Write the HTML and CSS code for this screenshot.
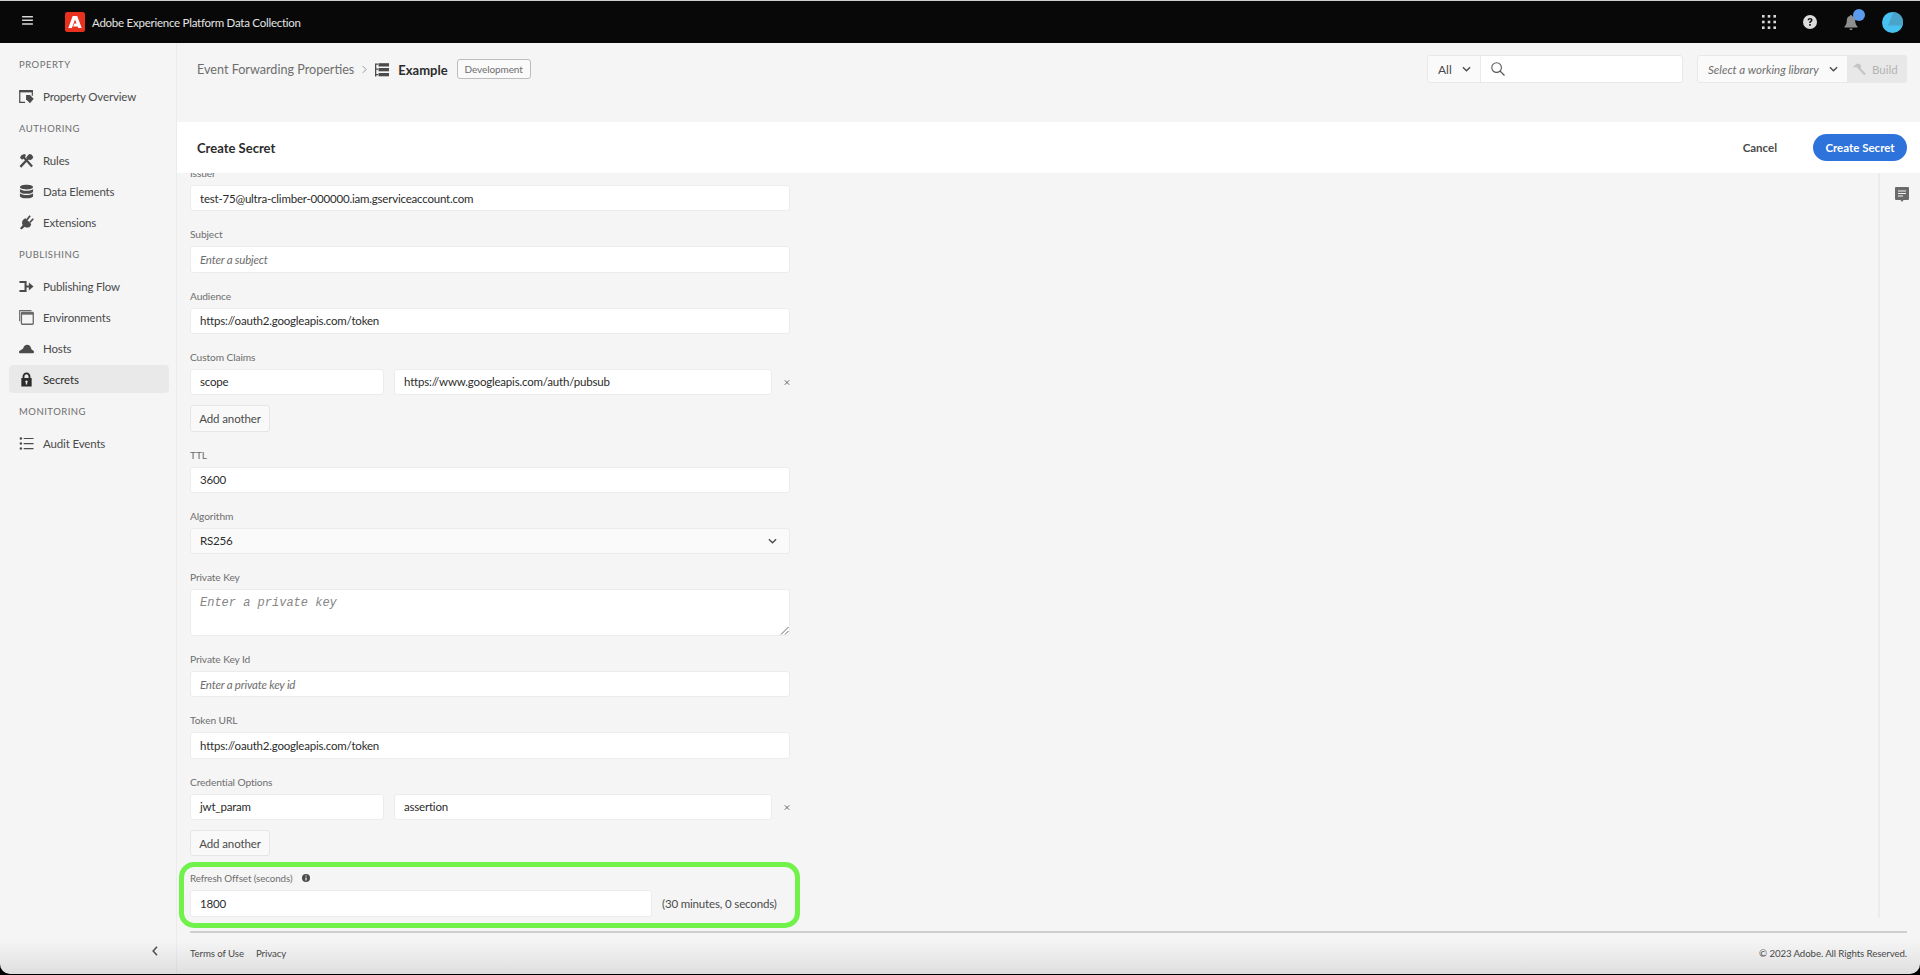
FILE: index.html
```html
<!DOCTYPE html>
<html lang="en">
<head>
<meta charset="utf-8">
<title>Create Secret</title>
<link rel="stylesheet" href="styles.css">
</head>
<body>
<div class="app">
  <header class="topbar">
    <svg class="menu-icon" viewBox="0 0 12 10"><path d="M0 0h12v1.600H0zM0 4h12v1.600H0zM0 8h12v1.600H0z"/></svg>
    <svg class="logo" viewBox="0 0 20 20"><rect width="20" height="20" rx="2.500" fill="#e8321f"/><path d="M7.700 4h4.500l4.500 12h-3.400L10 7.600 6.900 16H3.300z M9.300 11.400h2.700l1.300 3.200H8.100z" fill="#fff"/></svg>
    <span class="product">Adobe Experience Platform Data Collection</span>
    <div class="top-actions">
      <svg class="grid-icon" viewBox="0 0 14 14"><g fill="#d8d8d8"><rect x="0" y="0" width="2.600" height="2.600"/><rect x="5.700" y="0" width="2.600" height="2.600"/><rect x="11.400" y="0" width="2.600" height="2.600"/><rect x="0" y="5.700" width="2.600" height="2.600"/><rect x="5.700" y="5.700" width="2.600" height="2.600"/><rect x="11.400" y="5.700" width="2.600" height="2.600"/><rect x="0" y="11.400" width="2.600" height="2.600"/><rect x="5.700" y="11.400" width="2.600" height="2.600"/><rect x="11.400" y="11.400" width="2.600" height="2.600"/></g></svg>
      <svg class="help-icon" viewBox="0 0 14 14"><circle cx="7" cy="7" r="7" fill="#dcdcdc"/><path d="M4.600 5.300C4.700 3.900 5.700 3 7.100 3c1.500 0 2.400.9 2.400 2 0 1-.6 1.500-1.200 1.900-.5.3-.6.6-.6 1.200H6.200c0-1 .2-1.500 1-2 .5-.3.7-.6.7-1 0-.5-.3-.8-.8-.8-.6 0-.9.4-1 1z" fill="#111"/><rect x="6.200" y="9" width="1.600" height="1.700" fill="#111"/></svg>
      <span class="bell">
        <svg class="bell-icon" viewBox="0 0 14 15"><path d="M7 0c.7 0 1 .4 1 1 2.200.5 3.200 2.200 3.200 4.400 0 3 .8 4.600 2.300 6.100v1H.5v-1C2 10 2.800 8.400 2.800 5.400 2.800 3.200 3.800 1.500 6 1c0-.6.300-1 1-1zM5.500 13.400h3C8.500 14.400 7.800 15 7 15s-1.500-.6-1.500-1.600z" fill="#8f8f8f"/></svg>
        <span class="bell-dot"></span>
      </span>
      <svg class="avatar" viewBox="0 0 21 21"><circle cx="10.500" cy="10.500" r="10.500" fill="#46c1f0"/><path d="M6 13.500 11.500 0A10.500 10.500 0 0 1 20.800 13.500z" fill="#4aa3c8"/></svg>
    </div>
  </header>

  <div class="workspace">
    <nav class="sidebar">
      <div class="nav-label">PROPERTY</div>
      <a class="nav-item"><svg class="nav-icon" viewBox="0 0 16 16"><path d="M6.500 14.200H.8V1.800h13.400v5.500" fill="none" stroke="#4b4b4b" stroke-width="1.300"/><rect x=".8" y="1.200" width="13.400" height="2.400" fill="#4b4b4b"/><path d="M7.500 6.500h4.200l4 4-4 4.700-4.200-4.200z" fill="#4b4b4b"/></svg>Property Overview</a>
      <div class="nav-label">AUTHORING</div>
      <a class="nav-item"><svg class="nav-icon" viewBox="0 0 16 16"><path d="M1.500 14.800 11 4.500" stroke="#4b4b4b" stroke-width="2.400" fill="none"/><path d="M7.500 4.800 10.800 1l2.500.5 2 2.800-1.200 2-2.200 1.500z" fill="#4b4b4b"/><path d="M14 14.500 5 4.500" stroke="#4b4b4b" stroke-width="2.400" fill="none"/><path d="M1 5 2.500 2.500 5.500 1l2 1-1.500 2.800-2.500 2.500z" fill="#4b4b4b"/></svg>Rules</a>
      <a class="nav-item"><svg class="nav-icon" viewBox="0 0 16 16"><path d="M8 .8c4 0 7 1 7 2.500S12 5.800 8 5.800 1 4.800 1 3.300 4 .8 8 .8zM1 5.200c1 1.300 3.800 1.900 7 1.900s6-.6 7-1.900v2.800C15 9.500 12 10.500 8 10.500S1 9.500 1 8zM1 9.900c1 1.300 3.800 1.900 7 1.900s6-.6 7-1.900v2.800c0 1.500-3 2.500-7 2.500S1 14.200 1 12.700z" fill="#4b4b4b"/></svg>Data Elements</a>
      <a class="nav-item"><svg class="nav-icon" viewBox="0 0 16 16"><path d="M7 3.500 13 9.500c-.3 2-1.500 3.500-3.500 3.800-1.400.2-2.500-.1-3.400-.9L2.800 15.500 1 14l3-3.300C3.200 9.500 3 8 3.500 6.800 4 5.200 5.300 4 7 3.500z" fill="#4b4b4b"/><path d="M8.500 5 11.800.8M11.500 8 15.200 4" stroke="#4b4b4b" stroke-width="1.900" fill="none"/></svg>Extensions</a>
      <div class="nav-label">PUBLISHING</div>
      <a class="nav-item"><svg class="nav-icon" viewBox="0 0 16 16"><path d="M.5 3.200H7V12.800H.5" fill="none" stroke="#4b4b4b" stroke-width="2.200"/><path d="M7 7h3.500V3.800L15.500 8l-5 4.200V9H7z" fill="#4b4b4b"/></svg>Publishing Flow</a>
      <a class="nav-item"><svg class="nav-icon" viewBox="0 0 16 16"><path d="M.7 12V.7h12.600" fill="none" stroke="#6a6a6a" stroke-width="1.200"/><rect x="2.600" y="2.600" width="12.600" height="12.600" rx=".8" fill="none" stroke="#6a6a6a" stroke-width="1.400"/><rect x="2.600" y="2.600" width="12.600" height="2.400" fill="#6a6a6a"/></svg>Environments</a>
      <a class="nav-item"><svg class="nav-icon" viewBox="0 0 16 16"><path d="M1.300 13C.5 13 0 12.400 0 11.600c0-1 .9-1.700 2-1.800.6-.9 1.400-1.400 2.300-1.500C5 5.600 6.700 4 8.700 4c2 0 3.500 1.300 4 3.200.4 1.200.6 1.800 1.300 2.400 1.200.2 2 1.100 2 2.100 0 .8-.6 1.300-1.300 1.300z" fill="#4b4b4b"/></svg>Hosts</a>
      <a class="nav-item is-active"><svg class="nav-icon" viewBox="0 0 16 16"><path d="M8 .5C5.500.5 3.800 2.300 3.800 4.800V6.500H2.500V15.500h11V6.500h-1.300V4.800C12.200 2.300 10.500.5 8 .5zM5.800 6.500V4.800C5.800 3.300 6.700 2.300 8 2.300s2.200 1 2.200 2.500V6.500zM8 9a1.300 1.300 0 0 1 .7 2.400V13.300H7.300V11.400A1.300 1.300 0 0 1 8 9z" fill="#2c2c2c" fill-rule="evenodd"/></svg>Secrets</a>
      <div class="nav-label">MONITORING</div>
      <a class="nav-item"><svg class="nav-icon" viewBox="0 0 16 16"><path d="M5 2h10.500v1.300H5zM5 7.400h10.500v1.300H5zM5 12.800h10.500v1.300H5z" fill="#4b4b4b"/><circle cx="2" cy="2.600" r="1.300" fill="#4b4b4b"/><circle cx="2" cy="8" r="1.300" fill="#4b4b4b"/><circle cx="2" cy="13.400" r="1.300" fill="#4b4b4b"/></svg>Audit Events</a>
      <div class="collapse"><svg class="collapse-icon" viewBox="0 0 6 10"><path d="M5 .8 1.200 5 5 9.200" fill="none" stroke="#555" stroke-width="1.600"/></svg></div>
    </nav>

    <main class="main">
      <div class="page-head">
        <div class="crumbs">
          <span class="crumb-root">Event Forwarding Properties</span>
          <svg class="crumb-sep" viewBox="0 0 6 10"><path d="M1 1l4 4-4 4" fill="none" stroke="#8e8e8e" stroke-width="1.100"/></svg>
          <svg class="server-icon" viewBox="0 0 14 14"><path d="M0 .5h1.300v13H0z M0 .5h3v1.300H0z M0 5.500h3v1.300H0z M0 11h3v1.300H0z" fill="#4b4b4b"/><rect x="3.500" y=".2" width="10.500" height="3.300" fill="#4b4b4b"/><rect x="3.500" y="5" width="10.500" height="3.300" fill="#4b4b4b"/><rect x="3.500" y="10" width="10.500" height="3.300" fill="#4b4b4b"/></svg>
          <strong class="crumb-current">Example</strong>
          <span class="tag">Development</span>
        </div>
        <div class="head-tools">
          <div class="search">
            <span class="search-scope">All<svg class="chev" viewBox="0 0 10 6"><path d="M1 1l4 4 4-4" fill="none" stroke="#4b4b4b" stroke-width="1.500"/></svg></span>
            <span class="search-box"><svg class="search-icon" viewBox="0 0 14 14"><circle cx="5.600" cy="5.600" r="4.800" fill="none" stroke="#5a5a5a" stroke-width="1.100"/><path d="M9 9l4.500 4.500" stroke="#5a5a5a" stroke-width="1.300"/></svg></span>
          </div>
          <div class="library">
            <span class="library-select">Select a working library<svg class="chev" viewBox="0 0 10 6"><path d="M1 1l4 4 4-4" fill="none" stroke="#4b4b4b" stroke-width="1.500"/></svg></span>
            <span class="build"><svg class="build-icon" viewBox="0 0 14 14"><path d="M6.500 5.500 13 12.500" stroke="#c4c4c4" stroke-width="2" fill="none"/><path d="M.5 5.500 5 1.500 8.500 2.500 9 5 7 7.500 4.500 5z" fill="#c4c4c4"/></svg>Build</span>
          </div>
        </div>
      </div>

      <div class="panel-head">
        <strong class="panel-title">Create Secret</strong>
        <div class="panel-actions">
          <span class="cancel">Cancel</span>
          <span class="primary">Create Secret</span>
        </div>
      </div>

      <div class="content">
        <div class="scroll">
          <form class="form">
            <div class="field"><div class="label">Issuer</div><div class="input">test-75@ultra-climber-000000.iam.gserviceaccount.com</div></div>
            <div class="field"><div class="label">Subject</div><div class="input is-empty">Enter a subject</div></div>
            <div class="field"><div class="label">Audience</div><div class="input">https://oauth2.googleapis.com/token</div></div>
            <div class="field">
              <div class="label">Custom Claims</div>
              <div class="pair"><div class="input key">scope</div><div class="input value">https://www.googleapis.com/auth/pubsub</div><svg class="remove" viewBox="0 0 8 8"><path d="M1 1l6 6M7 1 1 7" stroke="#5a5a5a" stroke-width="1.200"/></svg></div>
              <div class="add">Add another</div>
            </div>
            <div class="field"><div class="label">TTL</div><div class="input">3600</div></div>
            <div class="field"><div class="label">Algorithm</div><div class="input select">RS256<svg class="chev" viewBox="0 0 10 6"><path d="M1 1l4 4 4-4" fill="none" stroke="#4b4b4b" stroke-width="1.500"/></svg></div></div>
            <div class="field"><div class="label">Private Key</div><div class="textarea">Enter a private key<svg class="grip" viewBox="0 0 9 9"><path d="M8.500 1 1 8.500M8.500 5 5 8.500" stroke="#5a5a5a" stroke-width=".9"/></svg></div></div>
            <div class="field"><div class="label">Private Key Id</div><div class="input is-empty">Enter a private key id</div></div>
            <div class="field"><div class="label">Token URL</div><div class="input">https://oauth2.googleapis.com/token</div></div>
            <div class="field">
              <div class="label">Credential Options</div>
              <div class="pair"><div class="input key">jwt_param</div><div class="input value">assertion</div><svg class="remove" viewBox="0 0 8 8"><path d="M1 1l6 6M7 1 1 7" stroke="#5a5a5a" stroke-width="1.200"/></svg></div>
              <div class="add">Add another</div>
            </div>
            <div class="field refresh">
              <div class="label refresh-label">Refresh Offset (seconds)<svg class="info" viewBox="0 0 8 8"><circle cx="4" cy="4" r="4" fill="#4b4b4b"/><path d="M3.400 1.400h1.200v1.200H3.400zM3.400 3.400h1.200v3.200H3.400z" fill="#f5f5f5"/></svg></div>
              <div class="offset"><div class="input offset-input">1800</div><span class="offset-note">(30 minutes, 0 seconds)</span></div>
              <div class="highlight"></div>
            </div>
          </form>
        </div>
        <aside class="rail"><svg class="comment-icon" viewBox="0 0 14 15"><path d="M1 0h12a1 1 0 0 1 1 1v11a1 1 0 0 1-1 1H8.500L7 15l-1.500-2H1a1 1 0 0 1-1-1V1a1 1 0 0 1 1-1z" fill="#6a6a6a"/><path d="M3 3.500h8v1H3zM3 6h8v1H3zM3 8.500h5v1H3z" fill="#f5f5f5"/></svg></aside>
      </div>

      <footer class="footer">
        <span class="foot-links"><span>Terms of Use</span><span>Privacy</span></span>
        <span>© 2023 Adobe. All Rights Reserved.</span>
      </footer>
    </main>
  </div>
</div>
</body>
</html>
```
FILE: styles.css
```css
* { box-sizing: border-box; }
html, body { margin: 0; height: 975px; overflow: hidden; background: #000; }
body { font-family: "Lato", "Open Sans", sans-serif; color: #2c2c2c; }

.app {
  position: relative;
  height: 974px;
  display: flex;
  flex-direction: column;
  background: #f5f5f5;
  border-radius: 0 0 10px 10px;
  overflow: hidden;
}
.app::after {
  content: "";
  position: absolute;
  left: 0; right: 0; bottom: 0;
  height: 34px;
  background: linear-gradient(rgba(0,0,0,0), rgba(0,0,0,.09));
  pointer-events: none;
}

/* top bar */
.topbar {
  height: 43px;
  flex: none;
  display: flex;
  align-items: center;
  padding: 0 17px 0 22px;
  background: #080808;
  border-top: 1px solid #cfcfcf;
  color: #e4e4e4;
}
.menu-icon { width: 11px; height: 9px; fill: #d8d8d8; margin-right: 32px; margin-top: -3px; }
.logo { width: 20px; height: 20px; margin-right: 7px; }
.product { font-size: 11.500px; letter-spacing: -.25px; }
.top-actions { margin-left: auto; display: flex; align-items: center; }
.grid-icon { width: 14px; height: 14px; margin-right: 27px; margin-top: -1px; }
.help-icon { width: 14px; height: 14px; margin-right: 27px; }
.bell { position: relative; display: block; width: 14px; height: 15px; margin-right: 24px; }
.bell-icon { display: block; width: 14px; height: 15px; }
.bell-dot { position: absolute; left: 9px; top: -6px; width: 12px; height: 12px; border-radius: 50%; background: #5a9bee; }
.avatar { width: 21px; height: 21px; }

.workspace { flex: 1; min-height: 0; display: flex; }

/* sidebar */
.sidebar {
  width: 177px;
  flex: none;
  display: flex;
  flex-direction: column;
  padding: 15px 7px 0 9px;
  border-right: 1px solid #ebebeb;
}
.nav-label {
  height: 14px;
  margin: 0 0 10px 10px;
  font-size: 9.500px;
  line-height: 14px;
  letter-spacing: .5px;
  color: #6e6e6e;
}
.nav-item {
  height: 28px;
  display: flex;
  align-items: center;
  gap: 9px;
  padding-left: 10px;
  border-radius: 4px;
  font-size: 11.500px;
  letter-spacing: -.15px;
  color: #4b4b4b;
}
.nav-item + .nav-item { margin-top: 3px; }
.nav-item + .nav-label { margin-top: 12px; }
.nav-item.is-active { background: #e9e9e9; color: #2c2c2c; }
.nav-icon { width: 15px; height: 15px; flex: none; }
.collapse { margin-top: auto; height: 28px; display: flex; justify-content: flex-end; padding: 0 11px 0 0; }
.collapse-icon { width: 6px; height: 10px; }

/* main */
.main { flex: 1; min-width: 0; display: flex; flex-direction: column; }
.page-head {
  height: 79px;
  flex: none;
  display: flex;
  justify-content: space-between;
  padding: 12px 13px 0 20px;
}
.crumbs { height: 28px; display: flex; align-items: center; padding-top: 1px; }
.crumb-root { font-size: 12.600px; color: #6e6e6e; }
.crumb-sep { width: 5px; height: 9px; margin: 0 8px 0 8px; }
.server-icon { width: 14px; height: 14px; margin-right: 9px; }
.crumb-current { font-size: 13px; font-weight: 700; color: #2c2c2c; margin-right: 9px; }
.tag {
  height: 20px;
  padding: 0 7px;
  display: flex;
  align-items: center;
  border: 1px solid #bdbdbd;
  border-radius: 3px;
  background: #fafafa;
  font-size: 10px;
  letter-spacing: -.1px;
  color: #6e6e6e;
  margin-top: -2px;
}
.head-tools { display: flex; gap: 14px; }
.search {
  width: 256px;
  height: 28px;
  display: flex;
  border: 1px solid #e8e8e8;
  border-radius: 3px;
  background: #fff;
  overflow: hidden;
}
.search-scope {
  width: 53px;
  flex: none;
  display: flex;
  align-items: center;
  gap: 10px;
  padding-left: 10px;
  background: #fafafa;
  border-right: 1px solid #ebebeb;
  font-size: 12px;
  color: #4b4b4b;
}
.chev { width: 9px; height: 6px; flex: none; }
.search-box { flex: 1; display: flex; align-items: center; padding-left: 10px; }
.search-icon { width: 14px; height: 14px; }
.library {
  width: 210px;
  height: 28px;
  display: flex;
  border-radius: 3px;
  overflow: hidden;
}
.library-select {
  width: 150px;
  flex: none;
  display: flex;
  align-items: center;
  justify-content: space-between;
  padding: 0 9px 0 10px;
  background: #fafafa;
  border: 1px solid #e8e8e8;
  border-right: 0;
  border-radius: 3px 0 0 3px;
  font-size: 11.500px;
  font-style: italic;
  color: #6e6e6e;
}
.build {
  flex: 1;
  display: flex;
  align-items: center;
  gap: 6px;
  padding-left: 5px;
  background: #e8e8e8;
  font-size: 11.500px;
  color: #b3b3b3;
}
.build-icon { width: 14px; height: 14px; }

.panel-head {
  height: 51px;
  flex: none;
  display: flex;
  align-items: center;
  justify-content: space-between;
  padding: 0 13px 0 20px;
  background: #fff;
}
.panel-title { font-size: 13px; font-weight: 700; color: #2c2c2c; }
.panel-actions { display: flex; align-items: center; gap: 36px; }
.cancel { font-size: 11.500px; font-weight: 700; color: #4b4b4b; }
.primary {
  width: 94px;
  height: 27px;
  display: flex;
  align-items: center;
  justify-content: center;
  border-radius: 14px;
  background: #2e72db;
  color: #fff;
  font-size: 11.500px;
  font-weight: 700;
}

/* form */
.content { flex: 1; min-height: 0; display: flex; }
.scroll { flex: 1; min-width: 0; overflow: hidden; padding-left: 13px; }
.form { width: 600px; margin-top: -7px; display: flex; flex-direction: column; gap: 16px; }
.field { position: relative; }
.label {
  height: 14px;
  margin-bottom: 5px;
  display: flex;
  align-items: center;
  font-size: 10.200px;
  letter-spacing: -.1px;
  line-height: 14px;
  color: #6e6e6e;
}
.refresh-label { font-size: 9.800px; }
.input {
  height: 26.250px;
  display: flex;
  align-items: center;
  padding: 0 9px;
  border: 1px solid #ececec;
  border-radius: 3px;
  background: #fff;
  font-size: 11.500px;
  letter-spacing: -.2px;
  color: #2c2c2c;
}
.input.is-empty { font-style: italic; color: #6e6e6e; }
.input.select { justify-content: space-between; background: #fafafa; }
.input.select .chev { margin-right: 3px; }
.pair { display: flex; align-items: center; }
.key { width: 194px; flex: none; }
.value { width: 378px; flex: none; margin-left: 10px; }
.remove { width: 7px; height: 7px; margin-left: 12px; margin-top: 2px; }
.add {
  width: 80px;
  height: 26.500px;
  margin-top: 10px;
  display: flex;
  align-items: center;
  justify-content: center;
  border: 1px solid #e6e6e6;
  border-radius: 3px;
  background: #f9f9f9;
  font-size: 11.500px;
  letter-spacing: -.1px;
  color: #4b4b4b;
}
.textarea {
  position: relative;
  height: 47px;
  padding: 6px 9px;
  border: 1px solid #ececec;
  border-radius: 3px;
  background: #fff;
  font-family: "Liberation Mono", monospace;
  font-style: italic;
  font-size: 12px;
  line-height: 14px;
  color: #858585;
}
.grip { position: absolute; right: 0; bottom: 0; width: 9px; height: 9px; }
.refresh { margin-top: -1px; }
.info { width: 8px; height: 8px; margin-left: 10px; }
.offset { display: flex; align-items: center; }
.offset-input { width: 462px; flex: none; }
.offset-note { margin-left: 10px; font-size: 11.500px; letter-spacing: -.16px; color: #4b4b4b; }
.highlight {
  position: absolute;
  left: -11px;
  top: -9px;
  width: 621px;
  height: 66px;
  border: 5px solid #70f24a;
  border-radius: 15px;
}

.rail {
  width: 42px;
  flex: none;
  margin-bottom: 13px;
  padding: 14px 0 0 15px;
  border-left: 2px solid #ebebeb;
}
.comment-icon { display: block; width: 14px; height: 15px; }

.footer {
  height: 43px;
  flex: none;
  margin: 0 13px;
  padding-bottom: 1px;
  display: flex;
  align-items: center;
  justify-content: space-between;
  border-top: 2px solid #cfcfcf;
  font-size: 9.700px;
  letter-spacing: -.1px;
  color: #4b4b4b;
}
.foot-links { display: flex; gap: 12px; }
```
